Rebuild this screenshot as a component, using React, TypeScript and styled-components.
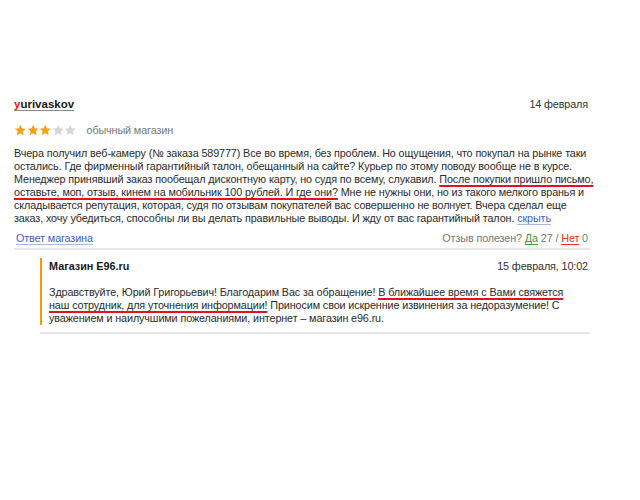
import React from "react";
import styled, { createGlobalStyle } from "styled-components";

const Global = createGlobalStyle`
  html, body { margin: 0; padding: 0; background: #fff; }
  body { font-family: "Liberation Sans", Arial, sans-serif; color: #2b2b2b; }
`;

const STAR = "12,1.5 15.1,8.3 22.5,9.1 17,14.1 18.5,21.5 12,17.8 5.5,21.5 7,14.1 1.5,9.1 8.9,8.3";

const Star = ({ on }: { on: boolean }) => (
  <StarSvg viewBox="0 0 24 24" $on={on}>
    <polygon points={STAR} />
  </StarSvg>
);

const App = () => {
  return (
    <Page>
      <Global />
      <Review>
        <Header>
          <Author>
            <span>y</span>urivaskov
          </Author>
          <DateText>14 февраля</DateText>
        </Header>
        <Rating>
          <Stars>
            {[1, 2, 3, 4, 5].map((i) => (
              <Star key={i} on={i <= 3} />
            ))}
          </Stars>
          <RatingLabel>обычный магазин</RatingLabel>
        </Rating>
        <Body>
          Вчера получил веб-камеру (№ заказа 589777) Все во время, без проблем. Но ощущения, что покупал на рынке таки
          <br />
          остались. Где фирменный гарантийный талон, обещанный на сайте? Курьер по этому поводу вообще не в курсе.
          <br />
          Менеджер принявший заказ пообещал дисконтную карту, но судя по всему, слукавил.{" "}
          <Marked>
            После покупки пришло письмо,
            <br />
            оставьте, моп, отзыв, кинем на мобильник 100 рублей. И где они?
          </Marked>{" "}
          Мне не нужны они, но из такого мелкого вранья и
          <br />
          складывается репутация, которая, судя по отзывам покупателей вас совершенно не волнует. Вчера сделал еще
          <br />
          заказ, хочу убедиться, способны ли вы делать правильные выводы. И жду от вас гарантийный талон.{" "}
          <Link>скрыть</Link>
        </Body>
        <Footer>
          <Link>Ответ магазина</Link>
          <Useful>
            Отзыв полезен? <Vote $tone="#3a9a2a">Да</Vote> 27 / <Vote $tone="#e8302a">Нет</Vote> 0
          </Useful>
        </Footer>
        <Divider />
        <Reply>
          <Header>
            <ShopName>Магазин E96.ru</ShopName>
            <DateText>15 февраля, 10:02</DateText>
          </Header>
          <ReplyBody>
            Здравствуйте, Юрий Григорьевич! Благодарим Вас за обращение!{" "}
            <Marked>В ближайшее время с Вами свяжется </Marked>
            <br />
            <Marked>наш сотрудник, для уточнения информации!</Marked> Приносим свои искренние извинения за недоразумение! С
            <br />
            уважением и наилучшими пожеланиями, интернет – магазин e96.ru.
          </ReplyBody>
        </Reply>
        <ReplyDivider />
      </Review>
    </Page>
  );
};

export default App;

const Page = styled.div`
  width: 640px;
  height: 500px;
  padding-top: 96px;
  box-sizing: border-box;
`;

const Review = styled.div`
  width: 576px;
  margin-left: 14px;
  font-size: 10.8px;
  letter-spacing: -0.12px;
`;

const Header = styled.div`
  display: flex;
  justify-content: space-between;
  align-items: center;
  height: 16px;
  line-height: 16px;
`;

const Author = styled.a`
  font-weight: bold;
  font-size: 11.5px;
  letter-spacing: 0;
  color: #1a1a1a;
  text-decoration: underline;
  text-decoration-color: #8a8a8a;
  text-underline-offset: 2px;
  span {
    color: #ee1111;
  }
`;

const DateText = styled.span`
  color: #333;
  margin-right: 2px;
`;

const Rating = styled.div`
  display: flex;
  align-items: center;
  height: 14px;
  margin-top: 11px;
`;

const Stars = styled.div`
  display: flex;
`;

const StarSvg = styled.svg<{ $on: boolean }>`
  width: 12.5px;
  height: 12.5px;
  polygon {
    fill: ${(p) => (p.$on ? "#f7a11a" : "#d6d6d6")};
  }
`;

const RatingLabel = styled.span`
  margin-left: 10px;
  color: #777;
`;

const Body = styled.div`
  margin-top: 9.5px;
  line-height: 13px;
  white-space: nowrap;
  color: #2b2b2b;
`;

const Marked = styled.span`
  text-decoration: underline;
  text-decoration-color: #e0141e;
  text-decoration-thickness: 1.5px;
  text-decoration-skip-ink: none;
  text-underline-offset: 2px;
`;

const Link = styled.a`
  color: #3f5fc4;
  text-decoration: underline;
  text-decoration-color: #aab8e6;
  text-decoration-skip-ink: none;
  text-underline-offset: 2px;
`;

const Footer = styled.div`
  display: flex;
  justify-content: space-between;
  align-items: center;
  margin-top: 6.5px;
  height: 14px;
  line-height: 14px;
  padding-left: 2px;
`;

const Useful = styled.span`
  color: #777;
  margin-right: 2px;
`;

const Vote = styled.a<{ $tone: string }>`
  color: ${(p) => p.$tone};
  text-decoration: underline;
  text-decoration-skip-ink: none;
  text-underline-offset: 2px;
`;

const Divider = styled.div`
  height: 2px;
  margin-top: 3px;
  background: #e6e6e6;
`;

const Reply = styled.div`
  margin: 8px 0 0 26px;
  padding-left: 7px;
  border-left: 2px solid #f7951d;
`;

const ShopName = styled.span`
  font-weight: bold;
  color: #1a1a1a;
  letter-spacing: 0;
`;

const ReplyBody = styled.div`
  margin-top: 11.5px;
  line-height: 13px;
  white-space: nowrap;
  color: #2b2b2b;
`;

const ReplyDivider = styled.div`
  height: 2px;
  margin: 7px 0 0 26px;
  background: #e6e6e6;
`;
